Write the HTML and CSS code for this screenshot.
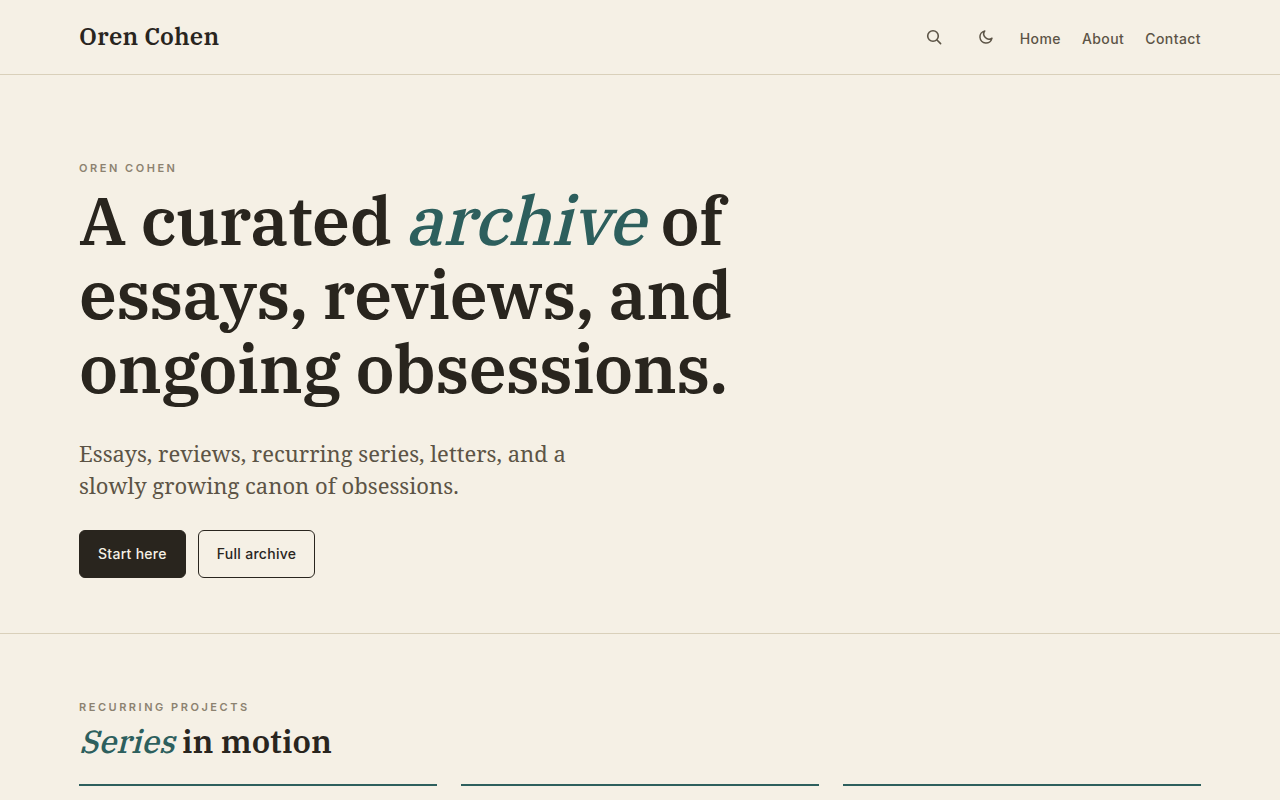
FILE: index.html
```html
<!DOCTYPE html>
<html lang="en">
<head>
    <meta charset="UTF-8">
    <meta name="viewport" content="width=device-width, initial-scale=1.0">
    <title>Oren Cohen</title>
    <link rel="stylesheet" href="styles.css">
</head>
<body>
    <header class="site-header">
        <div class="container header-inner">
            <a class="brand" href="#">Oren Cohen</a>
            <div class="header-tools">
                <button class="icon-btn" type="button" aria-label="Search">
                    <svg width="16" height="16" viewBox="0 0 16 16" fill="none" stroke="currentColor" stroke-width="1.6" stroke-linecap="round">
                        <circle cx="7" cy="7" r="5.3"/>
                        <path d="m11 11 3.6 3.6"/>
                    </svg>
                </button>
                <button class="icon-btn" type="button" aria-label="Toggle theme">
                    <svg width="16" height="16" viewBox="0 0 16 16" fill="none" stroke="currentColor" stroke-width="1.5" stroke-linecap="round" stroke-linejoin="round">
                        <path d="M14 9.2A6.1 6.1 0 1 1 6.8 1.9a5.2 5.2 0 0 0 7.2 7.3z"/>
                    </svg>
                </button>
                <nav class="site-nav" aria-label="Main">
                    <a href="#">Home</a>
                    <a href="#">About</a>
                    <a href="#">Contact</a>
                </nav>
            </div>
        </div>
    </header>

    <main>
        <section class="hero">
            <div class="container">
                <p class="eyebrow">Oren Cohen</p>
                <h1>A curated <em>archive</em> of essays, reviews, and ongoing obsessions.</h1>
                <p class="lede">Essays, reviews, recurring series, letters, and a slowly growing canon of obsessions.</p>
                <div class="actions">
                    <a class="btn btn-primary" href="#">Start here</a>
                    <a class="btn" href="#">Full archive</a>
                </div>
            </div>
        </section>

        <section class="series">
            <div class="container">
                <p class="eyebrow">Recurring projects</p>
                <h2><em>Series</em> in motion</h2>
                <div class="series-grid">
                    <article class="series-card"></article>
                    <article class="series-card"></article>
                    <article class="series-card"></article>
                </div>
            </div>
        </section>
    </main>
</body>
</html>
```
FILE: styles.css
```css
:root {
    --bg: #f5f0e5;
    --ink: #29251e;
    --muted: #5c5446;
    --faint: #8c8270;
    --line: #d9d0ba;
    --accent: #2d5f5d;
    --display: "IBM Plex Serif", "Noto Serif", "DejaVu Serif", serif;
    --serif: "Noto Serif", "Liberation Serif", serif;
    --sans: Inter, "Liberation Sans", sans-serif;
}

* {
    box-sizing: border-box;
}

body {
    margin: 0;
    background: var(--bg);
    color: var(--ink);
    font-family: var(--serif);
}

.container {
    max-width: 1170px;
    margin: 0 auto;
    padding: 0 24px;
}

/* header */
.site-header {
    border-bottom: 1px solid var(--line);
}

.header-inner {
    display: flex;
    justify-content: space-between;
    align-items: flex-start;
    padding-top: 19px;
    padding-bottom: 19px;
}

.brand {
    font-family: var(--display);
    font-size: 24px;
    font-weight: 600;
    line-height: 34px;
    letter-spacing: 0.01em;
    color: var(--ink);
    text-decoration: none;
}

.header-tools {
    display: flex;
    align-items: flex-end;
    gap: 16px;
}

.site-nav {
    display: flex;
    gap: 21px;
    font-family: var(--sans);
    font-size: 14px;
    font-weight: 500;
    line-height: 32px;
    letter-spacing: 0.03em;
}

.site-nav a {
    color: var(--muted);
    text-decoration: none;
}

.icon-btn {
    display: grid;
    place-items: center;
    width: 36px;
    height: 36px;
    padding: 0;
    border: 0;
    background: none;
    color: var(--muted);
    cursor: pointer;
}

/* hero */
.hero {
    padding: 84px 0 55px;
    border-bottom: 1px solid var(--line);
}

.eyebrow {
    margin: 0;
    font-family: var(--sans);
    font-size: 11px;
    font-weight: 600;
    line-height: 18px;
    letter-spacing: 0.23em;
    text-transform: uppercase;
    color: var(--faint);
}

h1,
h2 {
    font-family: var(--display);
    font-weight: 600;
}

/* slanted roman instead of the true italic */
h1 em,
h2 em {
    display: inline-block;
    font-style: normal;
    font-weight: 500;
    color: var(--accent);
    transform: skewX(-14deg);
    transform-origin: 0 80%;
}

h1 {
    max-width: 720px;
    margin: 6px 0 32px;
    font-size: 68px;
    line-height: 74px;
    letter-spacing: -0.01em;
}

.lede {
    max-width: 540px;
    margin: 0 0 29px;
    font-size: 22px;
    line-height: 32px;
    color: var(--muted);
}

.actions {
    display: flex;
    gap: 12px;
}

.btn {
    padding: 14px 18px;
    border: 1px solid var(--ink);
    border-radius: 6px;
    font-family: var(--sans);
    font-size: 14px;
    font-weight: 500;
    line-height: 18px;
    letter-spacing: 0.02em;
    color: var(--ink);
    text-decoration: none;
}

.btn-primary {
    background: var(--ink);
    color: var(--bg);
}

/* series */
.series {
    padding: 64px 0;
}

h2 {
    margin: 4px 0 22px;
    font-size: 32px;
    line-height: 42px;
}

.series-grid {
    display: grid;
    grid-template-columns: repeat(3, 1fr);
    gap: 24px;
}

.series-card {
    border-top: 2px solid var(--accent);
}
```
